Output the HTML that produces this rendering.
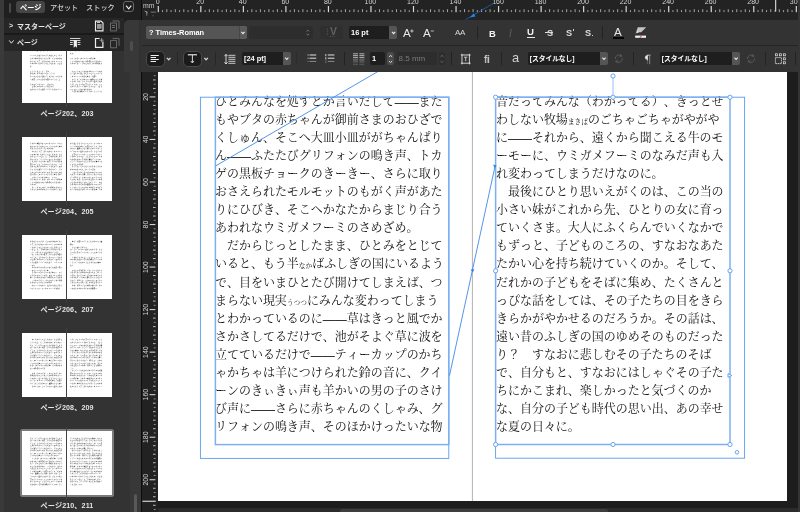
<!DOCTYPE html>
<html lang="ja"><head><meta charset="utf-8"><title>ページ210、211</title>
<style>
html,body{margin:0;padding:0}
body{width:800px;height:512px;overflow:hidden;position:relative;background:#1d1d1d;font-family:"Liberation Sans","Noto Sans CJK JP",sans-serif;color:#e6e6e6}
div,span,b,i{box-sizing:border-box}
.abs{position:absolute}
/* canvas */
#page{position:absolute;left:157.5px;top:54.4px;width:629.6px;height:446.6px;background:#fff}
#gutR{position:absolute;left:797.8px;top:0;width:3px;height:512px;z-index:6;background:#343434}
#gutB{position:absolute;left:157.5px;top:508px;width:640px;height:4px;background:#2b2b2b}
#hsb{position:absolute;left:340px;top:509px;width:268px;height:4px;background:#3d3d3d;border-radius:2px 2px 0 0}
.ln{position:absolute;width:227.6px;height:18px;line-height:18px;font-size:11.98px;white-space:nowrap;color:#111;font-family:"Liberation Serif","Noto Serif CJK SC",serif;text-align:justify;text-align-last:justify;font-weight:400;text-spacing-trim:space-all;font-kerning:none}
.ln.s{text-align:left;text-align-last:left;width:auto}
.ln u{text-decoration:none;font-weight:700}
.ln i{font-style:normal;font-size:6.7px;font-weight:400}
#ov{position:absolute;left:0;top:0;width:800px;height:512px}
/* rulers */
#vr{position:absolute;left:141px;top:60px;width:17px;height:452px;background:#222}
#vr svg,#hr svg{position:absolute;left:0;top:0}
#hr{position:absolute;left:141px;top:0;width:659px;height:20px;background:#232323;overflow:hidden}
#hr text,#vr text{font-family:"Liberation Sans",sans-serif;font-size:7px;fill:#d4d4d4}
/* toolbar */
#tb{z-index:5;position:absolute;left:124.4px;top:20px;width:676px;height:52px;background:#333;border-top-left-radius:5px}
#tb .sep{position:absolute;left:17.8px;top:24.6px;width:659px;height:1px;background:#252525}
#tb .edge{position:absolute;left:0;top:0;width:14.4px;height:52px;background:#383838;border-top-left-radius:5px}
.f{position:absolute;height:13px;border-radius:2px;font-size:7.5px;line-height:14.2px;color:#fff;white-space:nowrap;overflow:hidden;font-weight:700}
.sx{display:inline-block;font-size:8.1px;transform:scaleX(.92);transform-origin:0 50%}
.vs{position:absolute;width:1px;height:13px;background:#232323}
.ic{position:absolute}
/* left panel */
#lp{position:absolute;left:0;top:0;width:140.6px;height:512px;background:#333}
#lp .strip{position:absolute;left:0;top:0;width:3.6px;height:512px;background:#3a3a3a}
#tabs{position:absolute;left:0;top:0;width:140.6px;height:17.8px;background:#1f1f1f}
.row{position:absolute;left:3.6px;width:120.8px;background:#262626;font-size:7px;font-weight:700;color:#e8e8e8}
.rt{font-size:7px;font-weight:700;color:#e8e8e8;line-height:10px;white-space:nowrap}
.th{position:absolute;left:22.2px;width:89.6px;height:64px;background:#fff;overflow:hidden}
.th b{position:absolute;height:1.3px;display:block;background:repeating-linear-gradient(90deg,#7c7c7c 0,#9a9a9a 1.1px,#d8d8d8 1.3px,#d8d8d8 1.72px)}
.tt{position:absolute;width:32.25px;height:2.56px;line-height:2.56px;font-size:1.7px;white-space:nowrap;color:#000;font-weight:600;font-family:"Liberation Serif","Noto Serif CJK SC",serif;text-align:justify;text-align-last:justify;text-spacing-trim:space-all}
.tt.s{text-align:left;text-align-last:left;width:auto}
.tsp{position:absolute;left:65.9px;width:1.3px;height:73px;background:#404040}
.tl{position:absolute;left:3.6px;width:126px;text-align:center;font-size:7.15px;font-weight:700;color:#e4e4e4;line-height:10px;letter-spacing:.1px}
.tsel{position:absolute;left:20.2px;width:93.6px;height:68px;background:#7a7a7a;border-radius:2.5px}
.ln,.f,.tt,.tl,.rt,#tabs div,#tbi div,#hr svg,#vr svg{will-change:transform}
</style></head>
<body>
<div id="page"></div>
<div id="gutR"></div><div id="gutB"></div><div id="hsb"></div>
<div class="ln" style="left:215px;top:93px">ひとみんなを処すとか言いだして<u>——</u>また</div>
<div class="ln" style="left:215px;top:111px">もやブタの赤ちゃんが御前さまのおひざで</div>
<div class="ln" style="left:215px;top:129px">くしゅん、そこへ大皿小皿ががちゃんぱり</div>
<div class="ln" style="left:215px;top:147px">ん<u>——</u>ふたたびグリフォンの鳴き声、トカ</div>
<div class="ln" style="left:215px;top:165px">ゲの黒板チョークのきーきー、さらに取り</div>
<div class="ln" style="left:215px;top:183px">おさえられたモルモットのもがく声があた</div>
<div class="ln" style="left:215px;top:201px">りにひびき、そこへかなたからまじり合う</div>
<div class="ln s" style="left:215px;top:219px">あわれなウミガメフーミのさめざめ。</div>
<div class="ln" style="left:215px;top:237px">　だからじっとしたまま、ひとみをとじて</div>
<div class="ln" style="left:215px;top:255px">いると、もう半<i>なか</i>ばふしぎの国にいるよう</div>
<div class="ln" style="left:215px;top:274px">で、目をいまひとたび開けてしまえば、つ</div>
<div class="ln s" style="left:215px;top:292px">まらない現実<i>うつつ</i>にみんな変わってしまう</div>
<div class="ln" style="left:215px;top:310px">とわかっているのに<u>——</u>草はきっと風でか</div>
<div class="ln" style="left:215px;top:328px">さかさしてるだけで、池がそよぐ草に波を</div>
<div class="ln" style="left:215px;top:346px">立てているだけで<u>——</u>ティーカップのかち</div>
<div class="ln" style="left:215px;top:364px">ゃかちゃは羊につけられた鈴の音に、クイ</div>
<div class="ln" style="left:215px;top:382px">ーンのきぃきぃ声も羊かいの男の子のさけ</div>
<div class="ln" style="left:215px;top:400px">び声に<u>——</u>さらに赤ちゃんのくしゃみ、グ</div>
<div class="ln" style="left:215px;top:418px">リフォンの鳴き声、そのほかけったいな物</div>
<div class="ln" style="left:496px;top:93px">音だってみんな（わかってる）、きっとせ</div>
<div class="ln s" style="left:496px;top:111px">わしない牧場<i>まきば</i>のごちゃごちゃがやがや</div>
<div class="ln" style="left:496px;top:129px">に<u>——</u>それから、遠くから聞こえる牛のモ</div>
<div class="ln" style="left:496px;top:147px">ーモーに、ウミガメフーミのなみだ声も入</div>
<div class="ln s" style="left:496px;top:165px">れ変わってしまうだけなのに。</div>
<div class="ln" style="left:496px;top:183px">　最後にひとり思いえがくのは、この当の</div>
<div class="ln" style="left:496px;top:201px">小さい妹がこれから先、ひとりの女に育っ</div>
<div class="ln" style="left:496px;top:219px">ていくさま。大人にふくらんでいくなかで</div>
<div class="ln" style="left:496px;top:237px">もずっと、子どものころの、すなおなあた</div>
<div class="ln" style="left:496px;top:255px">たかい心を持ち続けていくのか。そして、</div>
<div class="ln" style="left:496px;top:274px">だれかの子どもをそばに集め、たくさんと</div>
<div class="ln" style="left:496px;top:292px">っぴな話をしては、その子たちの目をきら</div>
<div class="ln" style="left:496px;top:310px">きらかがやかせるのだろうか。その話は、</div>
<div class="ln" style="left:496px;top:328px">遠い昔のふしぎの国のゆめそのものだった</div>
<div class="ln s" style="left:496px;top:346px">り？　すなおに悲しむその子たちのそば</div>
<div class="ln" style="left:496px;top:364px">で、自分もと、すなおにはしゃぐその子た</div>
<div class="ln s" style="left:496px;top:382px">ちにかこまれ、楽しかったと気づくのか</div>
<div class="ln" style="left:496px;top:400px">な、自分の子ども時代の思い出、あの幸せ</div>
<div class="ln s" style="left:496px;top:418px">な夏の日々に。</div>
<svg id="ov" viewBox="0 0 800 512">
 <line x1="472.4" y1="54" x2="472.4" y2="501" stroke="#969696" stroke-width="0.75"/>
 <g fill="none" stroke="#4a94ea">
  <rect x="200.4" y="97.2" width="248.4" height="361.2" stroke-width="0.9" stroke="#5a9cec"/>
  <rect x="215.4" y="97.2" width="233.4" height="347.4" stroke-width="1.5" stroke="#7db0f0"/>
  <rect x="495.6" y="97.2" width="249" height="361" stroke-width="0.9" stroke="#5a9cec"/>
  <rect x="495.6" y="97.2" width="234.4" height="347.3" stroke-width="1.5" stroke="#7db0f0"/>
  <line x1="215.5" y1="166" x2="496" y2="2.8" stroke-width="0.9" stroke="#3f8ae6"/>
  <line x1="449.5" y1="375.5" x2="495" y2="166.4" stroke-width="0.9" stroke="#3f8ae6"/>
  <line x1="613" y1="76" x2="613" y2="97" stroke-width="0.8" stroke="#7db0f0"/>
 </g>
 <g fill="#fff" stroke="#5a9cec" stroke-width="0.9">
  <circle cx="495.6" cy="97.2" r="2.1"/><circle cx="613" cy="97.2" r="2.1"/><circle cx="730" cy="97.2" r="2.1"/>
  <circle cx="495.6" cy="270.8" r="2.1"/><circle cx="730" cy="270.8" r="2.1"/>
  <circle cx="495.6" cy="444.5" r="2.1"/><circle cx="613" cy="444.5" r="2.1"/><circle cx="730" cy="444.5" r="2.1"/>
  <circle cx="613" cy="76" r="2.1"/><circle cx="737" cy="452.3" r="1.8"/>
  <path d="M728 373.6 L731.8 375.5 L728 377.4 Z"/>
 </g>
 <path d="M493.2 164.6 L496.6 165.4 L494.6 168.2 Z" fill="#2f80e6"/>
 <path d="M470.6 269.4 L474.4 269.2 L472.8 272.6 Z" fill="#2f80e6"/>
</svg>
<div id="vr"><div class="abs" style="left:-.4px;top:0;width:1.3px;height:452px;background:#0c0c0c"></div><svg width="17" height="512" viewBox="0 60 17 512"><rect x="12" y="70.91" width="2.6" height="1" fill="#bcbcbc"/><rect x="12.8" y="75.17" width="1.8" height="1" fill="#909090"/><rect x="12" y="79.42" width="2.6" height="1" fill="#bcbcbc"/><rect x="12.8" y="83.67" width="1.8" height="1" fill="#909090"/><rect x="12" y="87.93" width="2.6" height="1" fill="#bcbcbc"/><rect x="12.8" y="92.18" width="1.8" height="1" fill="#909090"/><rect x="8.6" y="96.38" width="5.8" height="1.1" fill="#d0d0d0"/><rect x="12.8" y="100.69" width="1.8" height="1" fill="#909090"/><rect x="12" y="104.94" width="2.6" height="1" fill="#bcbcbc"/><rect x="12.8" y="109.19" width="1.8" height="1" fill="#909090"/><rect x="12" y="113.45" width="2.6" height="1" fill="#bcbcbc"/><rect x="12.8" y="117.70" width="1.8" height="1" fill="#909090"/><rect x="12" y="121.95" width="2.6" height="1" fill="#bcbcbc"/><rect x="12.8" y="126.21" width="1.8" height="1" fill="#909090"/><rect x="12" y="130.46" width="2.6" height="1" fill="#bcbcbc"/><rect x="12.8" y="134.71" width="1.8" height="1" fill="#909090"/><rect x="8.6" y="138.92" width="5.8" height="1.1" fill="#d0d0d0"/><rect x="12.8" y="143.22" width="1.8" height="1" fill="#909090"/><rect x="12" y="147.47" width="2.6" height="1" fill="#bcbcbc"/><rect x="12.8" y="151.73" width="1.8" height="1" fill="#909090"/><rect x="12" y="155.98" width="2.6" height="1" fill="#bcbcbc"/><rect x="12.8" y="160.24" width="1.8" height="1" fill="#909090"/><rect x="12" y="164.49" width="2.6" height="1" fill="#bcbcbc"/><rect x="12.8" y="168.74" width="1.8" height="1" fill="#909090"/><rect x="12" y="173.00" width="2.6" height="1" fill="#bcbcbc"/><rect x="12.8" y="177.25" width="1.8" height="1" fill="#909090"/><rect x="8.6" y="181.45" width="5.8" height="1.1" fill="#d0d0d0"/><rect x="12.8" y="185.76" width="1.8" height="1" fill="#909090"/><rect x="12" y="190.01" width="2.6" height="1" fill="#bcbcbc"/><rect x="12.8" y="194.26" width="1.8" height="1" fill="#909090"/><rect x="12" y="198.52" width="2.6" height="1" fill="#bcbcbc"/><rect x="12.8" y="202.77" width="1.8" height="1" fill="#909090"/><rect x="12" y="207.02" width="2.6" height="1" fill="#bcbcbc"/><rect x="12.8" y="211.28" width="1.8" height="1" fill="#909090"/><rect x="12" y="215.53" width="2.6" height="1" fill="#bcbcbc"/><rect x="12.8" y="219.78" width="1.8" height="1" fill="#909090"/><rect x="8.6" y="223.99" width="5.8" height="1.1" fill="#d0d0d0"/><rect x="12.8" y="228.29" width="1.8" height="1" fill="#909090"/><rect x="12" y="232.54" width="2.6" height="1" fill="#bcbcbc"/><rect x="12.8" y="236.80" width="1.8" height="1" fill="#909090"/><rect x="12" y="241.05" width="2.6" height="1" fill="#bcbcbc"/><rect x="12.8" y="245.30" width="1.8" height="1" fill="#909090"/><rect x="12" y="249.56" width="2.6" height="1" fill="#bcbcbc"/><rect x="12.8" y="253.81" width="1.8" height="1" fill="#909090"/><rect x="12" y="258.06" width="2.6" height="1" fill="#bcbcbc"/><rect x="12.8" y="262.32" width="1.8" height="1" fill="#909090"/><rect x="8.6" y="266.52" width="5.8" height="1.1" fill="#d0d0d0"/><rect x="12.8" y="270.82" width="1.8" height="1" fill="#909090"/><rect x="12" y="275.08" width="2.6" height="1" fill="#bcbcbc"/><rect x="12.8" y="279.33" width="1.8" height="1" fill="#909090"/><rect x="12" y="283.58" width="2.6" height="1" fill="#bcbcbc"/><rect x="12.8" y="287.84" width="1.8" height="1" fill="#909090"/><rect x="12" y="292.09" width="2.6" height="1" fill="#bcbcbc"/><rect x="12.8" y="296.34" width="1.8" height="1" fill="#909090"/><rect x="12" y="300.60" width="2.6" height="1" fill="#bcbcbc"/><rect x="12.8" y="304.85" width="1.8" height="1" fill="#909090"/><rect x="8.6" y="309.05" width="5.8" height="1.1" fill="#d0d0d0"/><rect x="12.8" y="313.36" width="1.8" height="1" fill="#909090"/><rect x="12" y="317.61" width="2.6" height="1" fill="#bcbcbc"/><rect x="12.8" y="321.86" width="1.8" height="1" fill="#909090"/><rect x="12" y="326.12" width="2.6" height="1" fill="#bcbcbc"/><rect x="12.8" y="330.37" width="1.8" height="1" fill="#909090"/><rect x="12" y="334.62" width="2.6" height="1" fill="#bcbcbc"/><rect x="12.8" y="338.88" width="1.8" height="1" fill="#909090"/><rect x="12" y="343.13" width="2.6" height="1" fill="#bcbcbc"/><rect x="12.8" y="347.38" width="1.8" height="1" fill="#909090"/><rect x="8.6" y="351.59" width="5.8" height="1.1" fill="#d0d0d0"/><rect x="12.8" y="355.89" width="1.8" height="1" fill="#909090"/><rect x="12" y="360.14" width="2.6" height="1" fill="#bcbcbc"/><rect x="12.8" y="364.40" width="1.8" height="1" fill="#909090"/><rect x="12" y="368.65" width="2.6" height="1" fill="#bcbcbc"/><rect x="12.8" y="372.90" width="1.8" height="1" fill="#909090"/><rect x="12" y="377.16" width="2.6" height="1" fill="#bcbcbc"/><rect x="12.8" y="381.41" width="1.8" height="1" fill="#909090"/><rect x="12" y="385.67" width="2.6" height="1" fill="#bcbcbc"/><rect x="12.8" y="389.92" width="1.8" height="1" fill="#909090"/><rect x="8.6" y="394.12" width="5.8" height="1.1" fill="#d0d0d0"/><rect x="12.8" y="398.43" width="1.8" height="1" fill="#909090"/><rect x="12" y="402.68" width="2.6" height="1" fill="#bcbcbc"/><rect x="12.8" y="406.93" width="1.8" height="1" fill="#909090"/><rect x="12" y="411.19" width="2.6" height="1" fill="#bcbcbc"/><rect x="12.8" y="415.44" width="1.8" height="1" fill="#909090"/><rect x="12" y="419.69" width="2.6" height="1" fill="#bcbcbc"/><rect x="12.8" y="423.95" width="1.8" height="1" fill="#909090"/><rect x="12" y="428.20" width="2.6" height="1" fill="#bcbcbc"/><rect x="12.8" y="432.45" width="1.8" height="1" fill="#909090"/><rect x="8.6" y="436.66" width="5.8" height="1.1" fill="#d0d0d0"/><rect x="12.8" y="440.96" width="1.8" height="1" fill="#909090"/><rect x="12" y="445.21" width="2.6" height="1" fill="#bcbcbc"/><rect x="12.8" y="449.47" width="1.8" height="1" fill="#909090"/><rect x="12" y="453.72" width="2.6" height="1" fill="#bcbcbc"/><rect x="12.8" y="457.97" width="1.8" height="1" fill="#909090"/><rect x="12" y="462.23" width="2.6" height="1" fill="#bcbcbc"/><rect x="12.8" y="466.48" width="1.8" height="1" fill="#909090"/><rect x="12" y="470.73" width="2.6" height="1" fill="#bcbcbc"/><rect x="12.8" y="474.99" width="1.8" height="1" fill="#909090"/><rect x="8.6" y="479.19" width="5.8" height="1.1" fill="#d0d0d0"/><rect x="12.8" y="483.49" width="1.8" height="1" fill="#909090"/><rect x="12" y="487.75" width="2.6" height="1" fill="#bcbcbc"/><rect x="12.8" y="492.00" width="1.8" height="1" fill="#909090"/><rect x="12" y="496.25" width="2.6" height="1" fill="#bcbcbc"/><rect x="12" y="504.76" width="2.6" height="1" fill="#bcbcbc"/><rect x="12.8" y="509.01" width="1.8" height="1" fill="#909090"/><rect x="12" y="513.27" width="2.6" height="1" fill="#bcbcbc"/><rect x="12.8" y="517.52" width="1.8" height="1" fill="#909090"/><rect x="8.6" y="521.72" width="5.8" height="1.1" fill="#d0d0d0"/><text transform="translate(7,96.93) rotate(-90)" text-anchor="middle">20</text><text transform="translate(7,139.47) rotate(-90)" text-anchor="middle">40</text><text transform="translate(7,182.00) rotate(-90)" text-anchor="middle">60</text><text transform="translate(7,224.54) rotate(-90)" text-anchor="middle">80</text><text transform="translate(7,267.07) rotate(-90)" text-anchor="middle">100</text><text transform="translate(7,309.60) rotate(-90)" text-anchor="middle">120</text><text transform="translate(7,352.14) rotate(-90)" text-anchor="middle">140</text><text transform="translate(7,394.67) rotate(-90)" text-anchor="middle">160</text><text transform="translate(7,437.21) rotate(-90)" text-anchor="middle">180</text><text transform="translate(7,479.74) rotate(-90)" text-anchor="middle">200</text><text transform="translate(7,522.27) rotate(-90)" text-anchor="middle">220</text><rect x="1.4" y="500.7" width="13.4" height="1.1" fill="#e0e0e0"/></svg></div>
<div id="hr"><svg width="660" height="20" viewBox="-1 0 660 20"><rect x="15.70" y="6" width="1.2" height="6.2" fill="#d8d8d8"/><rect x="20.05" y="10" width="1" height="2.1" fill="#9a9a9a"/><rect x="24.31" y="9.2" width="1" height="2.9" fill="#a6a6a6"/><rect x="28.56" y="10" width="1" height="2.1" fill="#9a9a9a"/><rect x="32.81" y="9.2" width="1" height="2.9" fill="#a6a6a6"/><rect x="37.07" y="10" width="1" height="2.1" fill="#9a9a9a"/><rect x="41.32" y="9.2" width="1" height="2.9" fill="#a6a6a6"/><rect x="45.57" y="10" width="1" height="2.1" fill="#9a9a9a"/><rect x="49.83" y="9.2" width="1" height="2.9" fill="#a6a6a6"/><rect x="54.08" y="10" width="1" height="2.1" fill="#9a9a9a"/><rect x="58.23" y="6" width="1.2" height="6.2" fill="#d8d8d8"/><rect x="62.59" y="10" width="1" height="2.1" fill="#9a9a9a"/><rect x="66.84" y="9.2" width="1" height="2.9" fill="#a6a6a6"/><rect x="71.09" y="10" width="1" height="2.1" fill="#9a9a9a"/><rect x="75.35" y="9.2" width="1" height="2.9" fill="#a6a6a6"/><rect x="79.60" y="10" width="1" height="2.1" fill="#9a9a9a"/><rect x="83.85" y="9.2" width="1" height="2.9" fill="#a6a6a6"/><rect x="88.11" y="10" width="1" height="2.1" fill="#9a9a9a"/><rect x="92.36" y="9.2" width="1" height="2.9" fill="#a6a6a6"/><rect x="96.61" y="10" width="1" height="2.1" fill="#9a9a9a"/><rect x="100.77" y="6" width="1.2" height="6.2" fill="#d8d8d8"/><rect x="105.12" y="10" width="1" height="2.1" fill="#9a9a9a"/><rect x="109.37" y="9.2" width="1" height="2.9" fill="#a6a6a6"/><rect x="113.63" y="10" width="1" height="2.1" fill="#9a9a9a"/><rect x="117.88" y="9.2" width="1" height="2.9" fill="#a6a6a6"/><rect x="122.13" y="10" width="1" height="2.1" fill="#9a9a9a"/><rect x="126.39" y="9.2" width="1" height="2.9" fill="#a6a6a6"/><rect x="130.64" y="10" width="1" height="2.1" fill="#9a9a9a"/><rect x="134.90" y="9.2" width="1" height="2.9" fill="#a6a6a6"/><rect x="139.15" y="10" width="1" height="2.1" fill="#9a9a9a"/><rect x="143.30" y="6" width="1.2" height="6.2" fill="#d8d8d8"/><rect x="147.66" y="10" width="1" height="2.1" fill="#9a9a9a"/><rect x="151.91" y="9.2" width="1" height="2.9" fill="#a6a6a6"/><rect x="156.16" y="10" width="1" height="2.1" fill="#9a9a9a"/><rect x="160.42" y="9.2" width="1" height="2.9" fill="#a6a6a6"/><rect x="164.67" y="10" width="1" height="2.1" fill="#9a9a9a"/><rect x="168.92" y="9.2" width="1" height="2.9" fill="#a6a6a6"/><rect x="173.18" y="10" width="1" height="2.1" fill="#9a9a9a"/><rect x="177.43" y="9.2" width="1" height="2.9" fill="#a6a6a6"/><rect x="181.68" y="10" width="1" height="2.1" fill="#9a9a9a"/><rect x="185.84" y="6" width="1.2" height="6.2" fill="#d8d8d8"/><rect x="190.19" y="10" width="1" height="2.1" fill="#9a9a9a"/><rect x="194.44" y="9.2" width="1" height="2.9" fill="#a6a6a6"/><rect x="198.70" y="10" width="1" height="2.1" fill="#9a9a9a"/><rect x="202.95" y="9.2" width="1" height="2.9" fill="#a6a6a6"/><rect x="207.20" y="10" width="1" height="2.1" fill="#9a9a9a"/><rect x="211.46" y="9.2" width="1" height="2.9" fill="#a6a6a6"/><rect x="215.71" y="10" width="1" height="2.1" fill="#9a9a9a"/><rect x="219.96" y="9.2" width="1" height="2.9" fill="#a6a6a6"/><rect x="224.22" y="10" width="1" height="2.1" fill="#9a9a9a"/><rect x="228.37" y="6" width="1.2" height="6.2" fill="#d8d8d8"/><rect x="232.72" y="10" width="1" height="2.1" fill="#9a9a9a"/><rect x="236.98" y="9.2" width="1" height="2.9" fill="#a6a6a6"/><rect x="241.23" y="10" width="1" height="2.1" fill="#9a9a9a"/><rect x="245.48" y="9.2" width="1" height="2.9" fill="#a6a6a6"/><rect x="249.74" y="10" width="1" height="2.1" fill="#9a9a9a"/><rect x="253.99" y="9.2" width="1" height="2.9" fill="#a6a6a6"/><rect x="258.24" y="10" width="1" height="2.1" fill="#9a9a9a"/><rect x="262.50" y="9.2" width="1" height="2.9" fill="#a6a6a6"/><rect x="266.75" y="10" width="1" height="2.1" fill="#9a9a9a"/><rect x="270.90" y="6" width="1.2" height="6.2" fill="#d8d8d8"/><rect x="275.26" y="10" width="1" height="2.1" fill="#9a9a9a"/><rect x="279.51" y="9.2" width="1" height="2.9" fill="#a6a6a6"/><rect x="283.76" y="10" width="1" height="2.1" fill="#9a9a9a"/><rect x="288.02" y="9.2" width="1" height="2.9" fill="#a6a6a6"/><rect x="292.27" y="10" width="1" height="2.1" fill="#9a9a9a"/><rect x="296.52" y="9.2" width="1" height="2.9" fill="#a6a6a6"/><rect x="300.78" y="10" width="1" height="2.1" fill="#9a9a9a"/><rect x="305.03" y="9.2" width="1" height="2.9" fill="#a6a6a6"/><rect x="309.28" y="10" width="1" height="2.1" fill="#9a9a9a"/><rect x="313.44" y="6" width="1.2" height="6.2" fill="#d8d8d8"/><rect x="317.79" y="10" width="1" height="2.1" fill="#9a9a9a"/><rect x="322.04" y="9.2" width="1" height="2.9" fill="#a6a6a6"/><rect x="326.30" y="10" width="1" height="2.1" fill="#9a9a9a"/><rect x="330.55" y="9.2" width="1" height="2.9" fill="#a6a6a6"/><rect x="334.81" y="10" width="1" height="2.1" fill="#9a9a9a"/><rect x="339.06" y="9.2" width="1" height="2.9" fill="#a6a6a6"/><rect x="343.31" y="10" width="1" height="2.1" fill="#9a9a9a"/><rect x="347.57" y="9.2" width="1" height="2.9" fill="#a6a6a6"/><rect x="351.82" y="10" width="1" height="2.1" fill="#9a9a9a"/><rect x="355.97" y="6" width="1.2" height="6.2" fill="#d8d8d8"/><rect x="360.33" y="10" width="1" height="2.1" fill="#9a9a9a"/><rect x="364.58" y="9.2" width="1" height="2.9" fill="#a6a6a6"/><rect x="368.83" y="10" width="1" height="2.1" fill="#9a9a9a"/><rect x="373.09" y="9.2" width="1" height="2.9" fill="#a6a6a6"/><rect x="377.34" y="10" width="1" height="2.1" fill="#9a9a9a"/><rect x="381.59" y="9.2" width="1" height="2.9" fill="#a6a6a6"/><rect x="385.85" y="10" width="1" height="2.1" fill="#9a9a9a"/><rect x="390.10" y="9.2" width="1" height="2.9" fill="#a6a6a6"/><rect x="394.35" y="10" width="1" height="2.1" fill="#9a9a9a"/><rect x="398.51" y="6" width="1.2" height="6.2" fill="#d8d8d8"/><rect x="402.86" y="10" width="1" height="2.1" fill="#9a9a9a"/><rect x="407.11" y="9.2" width="1" height="2.9" fill="#a6a6a6"/><rect x="411.37" y="10" width="1" height="2.1" fill="#9a9a9a"/><rect x="415.62" y="9.2" width="1" height="2.9" fill="#a6a6a6"/><rect x="419.87" y="10" width="1" height="2.1" fill="#9a9a9a"/><rect x="424.13" y="9.2" width="1" height="2.9" fill="#a6a6a6"/><rect x="428.38" y="10" width="1" height="2.1" fill="#9a9a9a"/><rect x="432.63" y="9.2" width="1" height="2.9" fill="#a6a6a6"/><rect x="436.89" y="10" width="1" height="2.1" fill="#9a9a9a"/><rect x="441.04" y="6" width="1.2" height="6.2" fill="#d8d8d8"/><rect x="445.39" y="10" width="1" height="2.1" fill="#9a9a9a"/><rect x="449.65" y="9.2" width="1" height="2.9" fill="#a6a6a6"/><rect x="453.90" y="10" width="1" height="2.1" fill="#9a9a9a"/><rect x="458.15" y="9.2" width="1" height="2.9" fill="#a6a6a6"/><rect x="462.41" y="10" width="1" height="2.1" fill="#9a9a9a"/><rect x="466.66" y="9.2" width="1" height="2.9" fill="#a6a6a6"/><rect x="470.91" y="10" width="1" height="2.1" fill="#9a9a9a"/><rect x="475.17" y="9.2" width="1" height="2.9" fill="#a6a6a6"/><rect x="479.42" y="10" width="1" height="2.1" fill="#9a9a9a"/><rect x="483.57" y="6" width="1.2" height="6.2" fill="#d8d8d8"/><rect x="487.93" y="10" width="1" height="2.1" fill="#9a9a9a"/><rect x="492.18" y="9.2" width="1" height="2.9" fill="#a6a6a6"/><rect x="496.43" y="10" width="1" height="2.1" fill="#9a9a9a"/><rect x="500.69" y="9.2" width="1" height="2.9" fill="#a6a6a6"/><rect x="504.94" y="10" width="1" height="2.1" fill="#9a9a9a"/><rect x="509.19" y="9.2" width="1" height="2.9" fill="#a6a6a6"/><rect x="513.45" y="10" width="1" height="2.1" fill="#9a9a9a"/><rect x="517.70" y="9.2" width="1" height="2.9" fill="#a6a6a6"/><rect x="521.95" y="10" width="1" height="2.1" fill="#9a9a9a"/><rect x="526.11" y="6" width="1.2" height="6.2" fill="#d8d8d8"/><rect x="530.46" y="10" width="1" height="2.1" fill="#9a9a9a"/><rect x="534.71" y="9.2" width="1" height="2.9" fill="#a6a6a6"/><rect x="538.97" y="10" width="1" height="2.1" fill="#9a9a9a"/><rect x="543.22" y="9.2" width="1" height="2.9" fill="#a6a6a6"/><rect x="547.47" y="10" width="1" height="2.1" fill="#9a9a9a"/><rect x="551.73" y="9.2" width="1" height="2.9" fill="#a6a6a6"/><rect x="555.98" y="10" width="1" height="2.1" fill="#9a9a9a"/><rect x="560.24" y="9.2" width="1" height="2.9" fill="#a6a6a6"/><rect x="564.49" y="10" width="1" height="2.1" fill="#9a9a9a"/><rect x="568.64" y="6" width="1.2" height="6.2" fill="#d8d8d8"/><rect x="573.00" y="10" width="1" height="2.1" fill="#9a9a9a"/><rect x="577.25" y="9.2" width="1" height="2.9" fill="#a6a6a6"/><rect x="581.50" y="10" width="1" height="2.1" fill="#9a9a9a"/><rect x="585.76" y="9.2" width="1" height="2.9" fill="#a6a6a6"/><rect x="590.01" y="10" width="1" height="2.1" fill="#9a9a9a"/><rect x="594.26" y="9.2" width="1" height="2.9" fill="#a6a6a6"/><rect x="598.52" y="10" width="1" height="2.1" fill="#9a9a9a"/><rect x="602.77" y="9.2" width="1" height="2.9" fill="#a6a6a6"/><rect x="607.02" y="10" width="1" height="2.1" fill="#9a9a9a"/><rect x="611.18" y="6" width="1.2" height="6.2" fill="#d8d8d8"/><rect x="615.53" y="10" width="1" height="2.1" fill="#9a9a9a"/><rect x="619.78" y="9.2" width="1" height="2.9" fill="#a6a6a6"/><rect x="624.04" y="10" width="1" height="2.1" fill="#9a9a9a"/><rect x="628.29" y="9.2" width="1" height="2.9" fill="#a6a6a6"/><rect x="632.54" y="10" width="1" height="2.1" fill="#9a9a9a"/><rect x="636.80" y="9.2" width="1" height="2.9" fill="#a6a6a6"/><rect x="641.05" y="10" width="1" height="2.1" fill="#9a9a9a"/><rect x="645.30" y="9.2" width="1" height="2.9" fill="#a6a6a6"/><rect x="649.56" y="10" width="1" height="2.1" fill="#9a9a9a"/><rect x="653.71" y="6" width="1.2" height="6.2" fill="#d8d8d8"/><rect x="658.06" y="10" width="1" height="2.1" fill="#9a9a9a"/><text x="15.70" y="3.6" text-anchor="middle">0</text><text x="58.23" y="3.6" text-anchor="middle">20</text><text x="100.77" y="3.6" text-anchor="middle">40</text><text x="143.30" y="3.6" text-anchor="middle">60</text><text x="185.84" y="3.6" text-anchor="middle">80</text><text x="228.37" y="3.6" text-anchor="middle">100</text><text x="270.90" y="3.6" text-anchor="middle">120</text><text x="313.44" y="3.6" text-anchor="middle">140</text><text x="355.97" y="3.6" text-anchor="middle">160</text><text x="398.51" y="3.6" text-anchor="middle">180</text><text x="441.04" y="3.6" text-anchor="middle">200</text><text x="483.57" y="3.6" text-anchor="middle">220</text><text x="526.11" y="3.6" text-anchor="middle">240</text><text x="568.64" y="3.6" text-anchor="middle">260</text><text x="611.18" y="3.6" text-anchor="middle">280</text><text x="653.71" y="3.6" text-anchor="middle">300</text>
<text x="1" y="8" style="font-size:6.9px;fill:#c8c8c8">mm</text>
<rect x="8.6" y="11.6" width="5.4" height="1" fill="#777"/><path d="M2.6 11 L5.4 12.6 M4.8 11.2 L4.8 15.6" stroke="#aaa" stroke-width="0.8" fill="none"/><rect x="10.6" y="15.4" width="0.8" height="0.8" fill="#999"/>
<line x1="352.4" y1="2.8" x2="323.6" y2="19.6" stroke="#1d66bd" stroke-width="0.8"/>
<path d="M328 17.6 L331.7 13.3 L333.4 16.6 Z" fill="#2585ee"/>
<rect x="633.2" y="0" width="1" height="11.4" fill="#f0f0f0"/></svg><div class="abs" style="left:-.4px;top:0;width:1.3px;height:20px;background:#0c0c0c"></div></div>
<div id="tb"><div class="edge"></div><div class="sep"></div>
<div class="abs" style="left:5.6px;top:20.8px;width:3px;height:10.6px;border-radius:1.5px;background:#4e4e4e"></div>
<div class="abs" style="left:14.2px;top:0;width:1px;height:52px;background:#303030"></div>
<div id="tbi" class="abs" style="left:-124.4px;top:-20px;width:800px;height:72px">
<!-- row 1 -->
<div class="f" style="left:145.6px;top:26px;width:101px;background:#555;padding-left:2.8px;letter-spacing:-.05px"><span class="sx">? Times-Roman</span></div>
<div class="abs" style="left:238.6px;top:26px;width:8px;height:13px;background:#5b5b5b;border-left:1px solid #474747;border-radius:0 2px 2px 0"></div>
<svg class="ic" style="left:240px;top:31px;overflow:visible" width="6" height="5" viewBox="0 0 6 5"><g transform="translate(0.00,-0.40)"><path d="M1.4 1.3 L3 3.1 L4.6 1.3" fill="none" stroke="#eee" stroke-width="1.1"/></g></svg>
<div class="f" style="left:249px;top:26px;width:64px;background:#2d2d2d;border-radius:3px"></div>
<svg class="ic" style="left:305px;top:28px;overflow:visible" width="6" height="9" viewBox="0 0 6 9"><g transform="translate(-0.20,0.00)"><path d="M1.7 3.5 L3 2.2 L4.3 3.5 M1.7 5.9 L3 7.2 L4.3 5.9" fill="none" stroke="#808080" stroke-width="0.9"/></g></svg>
<div class="f" style="left:320px;top:26px;width:23px;background:#2f2f2f;border-radius:3px"></div>
<div class="abs" style="left:330px;top:25.6px;font-size:10.4px;line-height:12px;color:#616161;font-weight:700">V</div>
<svg class="ic" style="left:325px;top:27px;overflow:visible" width="14" height="12" viewBox="0 0 14 12"><g transform="translate(0.00,0.00)"><path d="M2.4 1.6 V8 M4.6 9.4 H10.2" stroke="#5a5a5a" stroke-width="0.8" stroke-dasharray="1.4 1" fill="none"/></g></svg>
<div class="f" style="left:348.5px;top:26px;width:41px;background:#1e1e1e;padding-left:2px;border-radius:2px 0 0 2px"><span class="sx">16 pt</span></div>
<div class="abs" style="left:389.4px;top:26px;width:8.4px;height:13px;background:#555;border-radius:0 2px 2px 0"></div>
<svg class="ic" style="left:391px;top:31px;overflow:visible" width="6" height="5" viewBox="0 0 6 5"><g transform="translate(-0.40,-0.40)"><path d="M1.4 1.3 L3 3.1 L4.6 1.3" fill="none" stroke="#eee" stroke-width="1.1"/></g></svg>
<div class="abs" style="left:402.6px;top:26.6px;font-size:11.6px;line-height:12px;color:#e4e4e4">A</div>
<svg class="ic" style="left:410px;top:29px;overflow:visible" width="5" height="5" viewBox="0 0 5 5"><g transform="translate(-0.40,-0.40)"><path d="M0.6 2.4 H4 M2.3 0.8 V4" stroke="#ddd" stroke-width="0.8"/></g></svg>
<div class="abs" style="left:423.4px;top:26.6px;font-size:11.6px;line-height:12px;color:#e4e4e4">A</div>
<svg class="ic" style="left:430px;top:29px;overflow:visible" width="5" height="5" viewBox="0 0 5 5"><g transform="translate(0.20,-0.40)"><path d="M0.6 2.4 H3.6" stroke="#ddd" stroke-width="0.8"/></g></svg>
<div class="abs" style="left:454.6px;top:27px;font-size:8px;line-height:11px;color:#d8d8d8;letter-spacing:-.3px">AA</div>
<div class="vs" style="left:477.2px;top:26px"></div>
<div class="abs" style="left:489.2px;top:27.8px;font-size:9.4px;line-height:12px;color:#f2f2f2;font-weight:700">B</div>
<div class="abs" style="left:509.4px;top:27.8px;font-size:10px;line-height:12px;color:#5e5e5e;font-style:italic">I</div>
<div class="abs" style="left:527.4px;top:26.4px;font-size:9.6px;line-height:12px;color:#eee;font-weight:700">U</div>
<div class="abs" style="left:527px;top:36.8px;width:7.6px;height:1px;background:#e8e8e8"></div>
<div class="abs" style="left:546.6px;top:26.8px;font-size:9.2px;line-height:12px;color:#ddd;font-weight:700">S</div>
<div class="abs" style="left:545.4px;top:32.4px;width:8.4px;height:.9px;background:#ddd"></div>
<div class="abs" style="left:565.6px;top:26.8px;font-size:9.2px;line-height:12px;color:#ddd;font-weight:700">S</div>
<div class="abs" style="left:572.6px;top:29px;width:1.2px;height:1.6px;background:#ccc"></div>
<div class="abs" style="left:584.8px;top:26.8px;font-size:9.2px;line-height:12px;color:#ddd;font-weight:700">S</div>
<div class="abs" style="left:591.8px;top:35.2px;width:1.2px;height:1.4px;background:#ccc"></div>
<div class="vs" style="left:602.2px;top:26px"></div>
<div class="abs" style="left:614px;top:26.4px;font-size:11.6px;line-height:12px;color:#e6e6e6">A</div>
<div class="abs" style="left:613px;top:36.5px;width:10.6px;height:1.6px;background:#050505"></div>
<svg class="ic" style="left:635px;top:27px;overflow:visible" width="13" height="12" viewBox="0 0 13 12"><g transform="translate(-0.40,-0.40)"><path d="M3.2 0.6 H11.6 L6.6 5.6 H1.8 V4.6 Z" fill="#c4c4c4"/><path d="M0.6 6.8 L3.4 4.4 L4.2 6 Z" fill="#e8e8e8"/><rect x="0.6" y="9" width="10.8" height="2.2" fill="#f2f2f2"/><path d="M5.4 11.2 L7 9" stroke="#e02020" stroke-width="1"/></g></svg>
<!-- row 2 -->
<div class="abs" style="left:145.5px;top:51px;width:18.8px;height:16px;background:#1b1b1b;border:1px solid #4a4a4a;border-radius:5px"></div>
<svg class="ic" style="left:150px;top:54px;overflow:visible" width="10" height="9" viewBox="0 0 10 9"><g transform="translate(0.00,0.00)"><path d="M0.6 1.5 H8.8 M0.6 3.5 H6 M0.6 5.5 H8.8 M0.6 7.5 H6" stroke="#f0f0f0" stroke-width="1"/></g></svg>
<svg class="ic" style="left:166px;top:57px;overflow:visible" width="6" height="5" viewBox="0 0 6 5"><g transform="translate(0.00,-0.20)"><path d="M0.9 1.1 L2.7 3 L4.5 1.1" fill="none" stroke="#d4d4d4" stroke-width="1.25"/></g></svg>
<div class="vs" style="left:177.2px;top:52px;background:#262626"></div>
<div class="abs" style="left:183px;top:51px;width:19px;height:16px;background:#1b1b1b;border:1px solid #4a4a4a;border-radius:5px"></div>
<svg class="ic" style="left:187px;top:54px;overflow:visible" width="11" height="11" viewBox="0 0 11 11"><g transform="translate(0.00,-0.40)"><path d="M0.8 1.2 H10" stroke="#f0f0f0" stroke-width="1.1"/><path d="M5.4 1.4 V9" stroke="#e8e8e8" stroke-width="0.9"/><path d="M3.8 7.4 L5.4 9.4 L7 7.4" fill="none" stroke="#ddd" stroke-width="0.9"/></g></svg>
<svg class="ic" style="left:203px;top:57px;overflow:visible" width="6" height="5" viewBox="0 0 6 5"><g transform="translate(0.40,-0.20)"><path d="M0.9 1.1 L2.7 3 L4.5 1.1" fill="none" stroke="#d4d4d4" stroke-width="1.25"/></g></svg>
<div class="vs" style="left:215px;top:52px;background:#262626"></div>
<svg class="ic" style="left:224px;top:53px;overflow:visible" width="14" height="12" viewBox="0 0 14 12"><g transform="translate(-0.40,0.40)"><path d="M2.4 1 V10.6 M0.8 2.8 L2.4 1 L4 2.8 M0.8 8.8 L2.4 10.6 L4 8.8" fill="none" stroke="#e6e6e6" stroke-width="0.9"/><path d="M4.8 1.9 H11.8 M4.8 3.9 H11.8 M4.8 5.9 H11.8 M4.8 7.9 H11.8 M4.8 9.9 H11.8" stroke="#dadada" stroke-width="0.9"/></g></svg>
<div class="f" style="left:241.9px;top:52px;width:40.8px;background:#1e1e1e;padding-left:2px;border-radius:2px 0 0 2px;letter-spacing:-.05px"><span class="sx">[24 pt]</span></div>
<div class="abs" style="left:282.6px;top:52px;width:8.4px;height:13px;background:#555;border-radius:0 2px 2px 0"></div>
<svg class="ic" style="left:284px;top:56px;overflow:visible" width="6" height="5" viewBox="0 0 6 5"><g transform="translate(-0.20,0.40)"><path d="M1.4 1.3 L3 3.1 L4.6 1.3" fill="none" stroke="#eee" stroke-width="1.1"/></g></svg>
<div class="vs" style="left:296px;top:52px;background:#2c2c2c"></div>
<svg class="ic" style="left:307px;top:54px;overflow:visible" width="10" height="10" viewBox="0 0 10 10"><g transform="translate(0.20,-0.40)"><path d="M2.4 1.4 H9 M2.4 4.6 H9" stroke="#e2e2e2" stroke-width="1"/><path d="M2.4 7.8 H9" stroke="#8a8a8a" stroke-width="1"/><path d="M0.4 1.4 H1.4 M0.4 4.6 H1.4" stroke="#e2e2e2" stroke-width="1"/><path d="M0.4 7.8 H1.4" stroke="#8a8a8a" stroke-width="1"/></g></svg>
<svg class="ic" style="left:324px;top:54px;overflow:visible" width="11" height="11" viewBox="0 0 11 11"><g transform="translate(0.40,-0.40)"><path d="M3.4 1.4 H10 M3.4 4.6 H10" stroke="#e2e2e2" stroke-width="1"/><path d="M3.4 7.8 H10" stroke="#8a8a8a" stroke-width="1"/><path d="M1.4 0.4 V2.6 M1.4 3.6 V5.8" stroke="#ddd" stroke-width="0.9"/><path d="M1.4 6.8 V9.6" stroke="#8a8a8a" stroke-width="0.9" stroke-dasharray="1 0.6"/></g></svg>
<div class="vs" style="left:344px;top:52px"></div>
<svg class="ic" style="left:353px;top:53px;overflow:visible" width="12" height="13" viewBox="0 0 12 13"><g transform="translate(0.00,-0.20)"><g stroke-width="0.8"><path d="M0 1 H5 M6.4 1 H11.4 M0 2.8 H5 M6.4 2.8 H11.4 M0 4.6 H5 M6.4 4.6 H11.4" stroke="#d0d0d0"/><path d="M0 6.4 H5 M6.4 6.4 H11.4 M0 8.2 H5 M6.4 8.2 H11.4" stroke="#8a8a8a"/><path d="M0 10 H5 M6.4 10 H11.4 M0 11.8 H5 M6.4 11.8 H11.4" stroke="#5e5e5e"/></g></g></svg>
<div class="f" style="left:370px;top:52px;width:15px;background:#1e1e1e;padding-left:1.8px"><span class="sx">1</span></div>
<div class="abs" style="left:387px;top:52px;width:7px;height:13px;background:#4b4b4b;border-radius:2px"></div>
<svg class="ic" style="left:388px;top:54px;overflow:visible" width="6" height="10" viewBox="0 0 6 10"><g transform="translate(-0.40,-0.50)"><path d="M1.5 3.3 L3 1.9 L4.5 3.3 M1.5 7.6 L3 9 L4.5 7.6" fill="none" stroke="#e6e6e6" stroke-width="1"/></g></svg>
<div class="f" style="left:397px;top:52px;width:40px;background:#2d2d2d;padding-left:1.6px;color:#7a7a7a;font-weight:400;font-size:8px;border-radius:3px">8.5 mm</div>
<div class="abs" style="left:438.8px;top:52px;width:6.4px;height:13px;background:#2d2d2d;border-radius:2px"></div>
<svg class="ic" style="left:439px;top:54px;overflow:visible" width="6" height="10" viewBox="0 0 6 10"><g transform="translate(0.00,-0.50)"><path d="M1.5 3.3 L3 1.9 L4.5 3.3 M1.5 7.6 L3 9 L4.5 7.6" fill="none" stroke="#6c6c6c" stroke-width="0.9"/></g></svg>
<div class="vs" style="left:451.2px;top:52px"></div>
<svg class="ic" style="left:460px;top:53px;overflow:visible" width="11" height="12" viewBox="0 0 11 12"><g transform="translate(0.40,0.40)"><path d="M1.6 0.4 V11 M9 0.4 V11 M0.4 1.6 H10.2 M0.4 9.8 H10.2" stroke="#e4e4e4" stroke-width="0.9" fill="none"/><path d="M3.6 3.8 H7 M5.3 3.8 V7.8" stroke="#e4e4e4" stroke-width="0.8"/></g></svg>
<div class="abs" style="left:484.2px;top:52.6px;font-size:11.4px;line-height:13px;color:#d4d4d4;font-weight:700;transform:scaleX(.8);transform-origin:0 50%">fi</div>
<div class="vs" style="left:501.2px;top:52px"></div>
<div class="abs" style="left:512.2px;top:50.8px;font-size:12.8px;line-height:13px;color:#d4d4d4">a</div>
<div class="f" style="left:528px;top:52px;width:72px;background:#1e1e1e;padding-left:1.8px;font-size:6.8px;letter-spacing:-.08px;border-radius:2px 0 0 2px">[スタイルなし]</div>
<div class="abs" style="left:599.8px;top:52px;width:8.4px;height:13px;background:#555;border-radius:0 2px 2px 0"></div>
<svg class="ic" style="left:601px;top:56px;overflow:visible" width="6" height="5" viewBox="0 0 6 5"><g transform="translate(0.00,0.40)"><path d="M1.4 1.3 L3 3.1 L4.6 1.3" fill="none" stroke="#eee" stroke-width="1.1"/></g></svg>
<svg class="ic" style="left:614px;top:53px;overflow:visible" width="11" height="11" viewBox="0 0 11 11"><g transform="translate(-0.40,0.40)"><path d="M1.6 5.6 A3.7 3.7 0 0 1 8 2.8 M8.8 5 A3.7 3.7 0 0 1 2.4 7.8" fill="none" stroke="#5c5c5c" stroke-width="0.9"/><path d="M6.4 0.6 L8.4 2.8 L5.8 3.6 M4 9.8 L2 7.8 L4.6 7" fill="none" stroke="#5c5c5c" stroke-width="0.8"/></g></svg>
<div class="vs" style="left:633.2px;top:52px"></div>
<svg class="ic" style="left:644px;top:55px;overflow:visible" width="8" height="11" viewBox="0 0 8 11"><g transform="translate(-0.20,-0.40)"><path d="M3.2 0.6 H6.8" stroke="#ddd" stroke-width="0.9"/><path d="M3.4 0.6 A2.2 2.2 0 0 0 3.4 5 Z" fill="#e2e2e2"/><path d="M3.6 0.6 V6" stroke="#ddd" stroke-width="1"/><path d="M5.8 0.6 V9.6" stroke="#777" stroke-width="1.2"/><path d="M3.6 6 V9.6" stroke="#666" stroke-width="0.8"/></g></svg>
<div class="f" style="left:660px;top:52px;width:72px;background:#1e1e1e;padding-left:1.8px;font-size:6.8px;letter-spacing:-.05px;border-radius:2px 0 0 2px">[スタイルなし]</div>
<div class="abs" style="left:731.9px;top:52px;width:8.4px;height:13px;background:#555;border-radius:0 2px 2px 0"></div>
<svg class="ic" style="left:733px;top:56px;overflow:visible" width="6" height="5" viewBox="0 0 6 5"><g transform="translate(0.10,0.40)"><path d="M1.4 1.3 L3 3.1 L4.6 1.3" fill="none" stroke="#eee" stroke-width="1.1"/></g></svg>
<svg class="ic" style="left:746px;top:53px;overflow:visible" width="11" height="11" viewBox="0 0 11 11"><g transform="translate(-0.20,0.40)"><path d="M1.6 5.6 A3.7 3.7 0 0 1 8 2.8 M8.8 5 A3.7 3.7 0 0 1 2.4 7.8" fill="none" stroke="#5c5c5c" stroke-width="0.9"/><path d="M6.4 0.6 L8.4 2.8 L5.8 3.6 M4 9.8 L2 7.8 L4.6 7" fill="none" stroke="#5c5c5c" stroke-width="0.8"/></g></svg>
<div class="vs" style="left:765px;top:52px"></div>
<svg class="ic" style="left:775px;top:53px;overflow:visible" width="12" height="12" viewBox="0 0 12 12"><g transform="translate(-0.40,0.00)"><g fill="none" stroke="#e0e0e0" stroke-width="0.7"><rect x="0.8" y="0.8" width="2" height="2"/><rect x="4.8" y="0.8" width="2" height="2"/><rect x="8.8" y="0.8" width="2" height="2"/><rect x="8.8" y="4.8" width="2" height="2"/><rect x="8.8" y="8.8" width="2" height="2"/><rect x="0.8" y="4.6" width="6" height="6" stroke-dasharray="1.2 0.8" stroke-width="1"/></g></g></svg>
<div class="vs" style="left:795.4px;top:52px"></div>
</div>

</div>
<div id="lp"><div class="abs" style="left:130px;top:50px;width:11px;height:462px;background:#383838"></div><div class="abs" style="left:124px;top:0;width:17px;height:27px;background:#1f1f1f"></div>
<div class="th" style="top:38.7px"><div class="tt" style="left:8.3px;top:5.56px">でくしゅん、そこへ大皿小皿ががちゃんぱ</div><div class="tt" style="left:8.3px;top:8.12px">りん——ふたたびグリフォンの鳴き声、ト</div><div class="tt s" style="left:8.3px;top:10.68px">カゲの黒板チョークのきーき</div><div class="tt" style="left:8.3px;top:15.80px">ー、さらに取りおさえられたモルモットの</div><div class="tt" style="left:8.3px;top:18.36px">もがく声があたりにひびき、そこへかなた</div><div class="tt" style="left:8.3px;top:20.93px">からまじり合うあわれなウミガメフーミの</div><div class="tt" style="left:8.3px;top:23.49px">さめざめ。だからじっとしたまま、ひとみ</div><div class="tt s" style="left:8.3px;top:26.05px">を</div><div class="tt s" style="left:8.3px;top:31.17px">とじていると、もう半な</div><div class="tt s" style="left:8.3px;top:33.73px">かばふしぎの国にいるようで、目</div><div class="tt" style="left:8.3px;top:36.29px">をいまひとたび開けてしまえば、つまらな</div><div class="tt s" style="left:8.3px;top:38.85px">い現実うつつにみんな変わってしまうと</div><div class="tt s" style="left:8.3px;top:43.98px">わかっているのに——草はきっ</div><div class="tt s" style="left:8.3px;top:46.54px">　と風でかさかさしてるだけで、</div><div class="tt" style="left:8.3px;top:49.10px">池がそよぐ草に波を立てているだけで——</div><div class="tt" style="left:48.2px;top:5.56px">ティーカップのかちゃかちゃは羊につけら</div><div class="tt" style="left:48.2px;top:8.12px">れた鈴の音に、クイーンのきぃきぃ声も羊</div><div class="tt" style="left:48.2px;top:10.68px">かいの男の子のさけび声に——さらに赤ち</div><div class="tt s" style="left:48.2px;top:13.24px">ゃん</div><div class="tt s" style="left:48.2px;top:18.36px">のくしゃみ、グリフォンの鳴き声</div><div class="tt" style="left:48.2px;top:20.93px">、そのほかけったいな物音だってみんな（</div><div class="tt" style="left:48.2px;top:23.49px">わかってる）、きっとせわしない牧場まき</div><div class="tt" style="left:48.2px;top:31.17px">　ばのごちゃごちゃがやがやに——それか</div><div class="tt" style="left:48.2px;top:33.73px">ら、遠くから聞こえる牛のモーモーに、ウ</div><div class="tt s" style="left:48.2px;top:36.29px">ミガメフーミのなみだ声も入れ変わ</div><div class="tt" style="left:48.2px;top:38.85px">　ってしまうだけなのに。最後にひとり思</div><div class="tt" style="left:48.2px;top:41.41px">いえがくのは、この当の小さい妹がこれか</div><div class="tt" style="left:48.2px;top:43.98px">ら先、ひとりの女に育っていくさま。大人</div><div class="tt" style="left:48.2px;top:46.54px">にふくらんでいくなかでもずっと、子ども</div><div class="tt s" style="left:48.2px;top:49.10px">のころの、すなおなあたたか</div><div class="tt" style="left:48.2px;top:51.66px">　い心を持ち続けていくのか。そして、だ</div></div><div class="tsp" style="top:34.2px"></div><div class="tl" style="top:109.1px">ページ202、203</div><div class="th" style="top:136.8px"><div class="tt" style="left:8.3px;top:5.56px">トカゲの黒板チョークのきーきー、さらに</div><div class="tt" style="left:8.3px;top:8.12px">取りおさえられたモルモットのもがく声が</div><div class="tt s" style="left:8.3px;top:10.68px">あたりにひびき、そこへかなた</div><div class="tt" style="left:8.3px;top:13.24px">　からまじり合うあわれなウミガメフーミ</div><div class="tt" style="left:8.3px;top:15.80px">のさめざめ。だからじっとしたまま、ひと</div><div class="tt" style="left:8.3px;top:18.36px">みをとじていると、もう半なかばふしぎの</div><div class="tt" style="left:8.3px;top:20.93px">国にいるようで、目をいまひとたび開けて</div><div class="tt" style="left:8.3px;top:23.49px">しまえば、つまらない現実うつつにみんな</div><div class="tt" style="left:8.3px;top:26.05px">変わってしまうとわかっているのに——草</div><div class="tt" style="left:8.3px;top:28.61px">はきっと風でかさかさしてるだけで、池が</div><div class="tt" style="left:8.3px;top:31.17px">そよぐ草に波を立てているだけで——ティ</div><div class="tt" style="left:8.3px;top:33.73px">ーカップのかちゃかちゃは羊につけられた</div><div class="tt" style="left:8.3px;top:36.29px">鈴の音に、クイーンのきぃきぃ声も羊かい</div><div class="tt s" style="left:8.3px;top:38.85px">　の男の子のさけび声に——さらに</div><div class="tt" style="left:8.3px;top:41.41px">赤ちゃんのくしゃみ、グリフォンの鳴き声</div><div class="tt" style="left:8.3px;top:43.98px">、そのほかけったいな物音だってみんな（</div><div class="tt s" style="left:8.3px;top:46.54px">わかって</div><div class="tt" style="left:8.3px;top:49.10px">　る）、きっとせわしない牧場まきばのご</div><div class="tt" style="left:8.3px;top:51.66px">ちゃごちゃがやがやに——それから、遠く</div><div class="tt" style="left:48.2px;top:5.56px">から聞こえる牛のモーモーに、ウミガメフ</div><div class="tt" style="left:48.2px;top:8.12px">ーミのなみだ声も入れ変わってしまうだけ</div><div class="tt" style="left:48.2px;top:10.68px">なのに。最後にひとり思いえがくのは、こ</div><div class="tt" style="left:48.2px;top:13.24px">の当の小さい妹がこれから先、ひとりの女</div><div class="tt" style="left:48.2px;top:15.80px">　に育っていくさま。大人にふくらんでい</div><div class="tt" style="left:48.2px;top:18.36px">くなかでもずっと、子どものころの、すな</div><div class="tt" style="left:48.2px;top:20.93px">おなあたたかい心を持ち続けていくのか。</div><div class="tt" style="left:48.2px;top:23.49px">そして、だれかの子どもをそばに集め、た</div><div class="tt s" style="left:48.2px;top:26.05px">くさんとっぴな話</div><div class="tt" style="left:48.2px;top:28.61px">　をしては、その子たちの目をきらきらか</div><div class="tt s" style="left:48.2px;top:31.17px">がやかせるのだろうか。その話は</div><div class="tt" style="left:48.2px;top:33.73px">　、遠い昔のふしぎの国のゆめそのものだ</div><div class="tt" style="left:48.2px;top:36.29px">ったり？すなおに悲しむその子たちのそば</div><div class="tt" style="left:48.2px;top:38.85px">で、自分もと、すなおにはしゃぐその子た</div><div class="tt" style="left:48.2px;top:41.41px">ちにかこまれ、楽しかったと気づくのかな</div><div class="tt" style="left:48.2px;top:43.98px">ひとみんなを処すとか言いだして——また</div><div class="tt" style="left:48.2px;top:46.54px">もやブタの赤ちゃんが御前さまのおひざで</div><div class="tt" style="left:48.2px;top:49.10px">くしゅん、そこへ大皿小皿ががちゃんぱり</div><div class="tt" style="left:48.2px;top:51.66px">ん——ふたたびグリフォンの鳴き声、トカ</div></div><div class="tsp" style="top:132.3px"></div><div class="tl" style="top:207.2px">ページ204、205</div><div class="th" style="top:234.9px"><div class="tt" style="left:8.3px;top:5.56px">があたりにひびき、そこへかなたからまじ</div><div class="tt" style="left:8.3px;top:8.12px">り合うあわれなウミガメフーミのさめざめ</div><div class="tt" style="left:8.3px;top:10.68px">。だからじっとしたまま、ひとみをとじて</div><div class="tt" style="left:8.3px;top:13.24px">いると、もう半なかばふしぎの国にいるよ</div><div class="tt s" style="left:8.3px;top:15.80px">うで、目をいまひとたび開けてしまえ</div><div class="tt" style="left:8.3px;top:18.36px">　ば、つまらない現実うつつにみんな変わ</div><div class="tt" style="left:8.3px;top:20.93px">ってしまうとわかっているのに——草はき</div><div class="tt" style="left:8.3px;top:23.49px">っと風でかさかさしてるだけで、池がそよ</div><div class="tt" style="left:8.3px;top:26.05px">ぐ草に波を立てているだけで——ティーカ</div><div class="tt s" style="left:8.3px;top:28.61px">ップの</div><div class="tt" style="left:8.3px;top:31.17px">　かちゃかちゃは羊につけられた鈴の音に</div><div class="tt s" style="left:8.3px;top:33.73px">、クイーンのきぃきぃ声</div><div class="tt" style="left:8.3px;top:36.29px">　も羊かいの男の子のさけび声に——さら</div><div class="tt" style="left:8.3px;top:38.85px">に赤ちゃんのくしゃみ、グリフォンの鳴き</div><div class="tt" style="left:8.3px;top:41.41px">声、そのほかけったいな物音だってみんな</div><div class="tt" style="left:8.3px;top:43.98px">　（わかってる）、きっとせわしない牧場</div><div class="tt s" style="left:8.3px;top:46.54px">まきばのごちゃごちゃがやが</div><div class="tt" style="left:8.3px;top:49.10px">　やに——それから、遠くから聞こえる牛</div><div class="tt s" style="left:8.3px;top:51.66px">のモーモーに、ウミガメフーミのなみだ</div><div class="tt" style="left:48.2px;top:5.56px">　声も入れ変わってしまうだけなのに。最</div><div class="tt s" style="left:48.2px;top:8.12px">後に</div><div class="tt s" style="left:48.2px;top:10.68px">　ひとり思いえがくの</div><div class="tt" style="left:48.2px;top:13.24px">は、この当の小さい妹がこれから先、ひと</div><div class="tt" style="left:48.2px;top:15.80px">りの女に育っていくさま。大人にふくらん</div><div class="tt s" style="left:48.2px;top:18.36px">でい</div><div class="tt" style="left:48.2px;top:20.93px">　くなかでもずっと、子どものころの、す</div><div class="tt" style="left:48.2px;top:23.49px">なおなあたたかい心を持ち続けていくのか</div><div class="tt" style="left:48.2px;top:26.05px">。そして、だれかの子どもをそばに集め、</div><div class="tt s" style="left:48.2px;top:28.61px">たく</div><div class="tt" style="left:48.2px;top:33.73px">　さんとっぴな話をしては、その子たちの</div><div class="tt" style="left:48.2px;top:36.29px">目をきらきらかがやかせるのだろうか。そ</div><div class="tt" style="left:48.2px;top:38.85px">の話は、遠い昔のふしぎの国のゆめそのも</div><div class="tt" style="left:48.2px;top:41.41px">のだったり？すなおに悲しむその子たちの</div><div class="tt" style="left:48.2px;top:43.98px">そばで、自分もと、すなおにはしゃぐその</div><div class="tt" style="left:48.2px;top:46.54px">子たちにかこまれ、楽しかったと気づくの</div><div class="tt" style="left:48.2px;top:49.10px">　かな、自分の子ども時代の思い出、あの</div><div class="tt s" style="left:48.2px;top:51.66px">—またもやブタの赤ちゃんが御前さ</div></div><div class="tsp" style="top:230.4px"></div><div class="tl" style="top:305.3px">ページ206、207</div><div class="th" style="top:332.9px"><div class="tt" style="left:8.3px;top:5.56px">　め。だからじっとしたまま、ひとみをと</div><div class="tt" style="left:8.3px;top:8.12px">じていると、もう半なかばふしぎの国にい</div><div class="tt" style="left:8.3px;top:10.68px">るようで、目をいまひとたび開けてしまえ</div><div class="tt" style="left:8.3px;top:13.24px">ば、つまらない現実うつつにみんな変わっ</div><div class="tt" style="left:8.3px;top:15.80px">てしまうとわかっているのに——草はきっ</div><div class="tt" style="left:8.3px;top:18.36px">と風でかさかさしてるだけで、池がそよぐ</div><div class="tt" style="left:8.3px;top:20.93px">草に波を立てているだけで——ティーカッ</div><div class="tt" style="left:8.3px;top:23.49px">プのかちゃかちゃは羊につけられた鈴の音</div><div class="tt" style="left:8.3px;top:26.05px">に、クイーンのきぃきぃ声も羊かいの男の</div><div class="tt" style="left:8.3px;top:28.61px">子のさけび声に——さらに赤ちゃんのくし</div><div class="tt" style="left:8.3px;top:31.17px">ゃみ、グリフォンの鳴き声、そのほかけっ</div><div class="tt s" style="left:8.3px;top:33.73px">たいな物音だってみ</div><div class="tt" style="left:8.3px;top:38.85px">　んな（わかってる）、きっとせわしない</div><div class="tt" style="left:8.3px;top:41.41px">牧場まきばのごちゃごちゃがやがやに——</div><div class="tt" style="left:8.3px;top:43.98px">それから、遠くから聞こえる牛のモーモー</div><div class="tt" style="left:8.3px;top:46.54px">に、ウミガメフーミのなみだ声も入れ変わ</div><div class="tt" style="left:8.3px;top:49.10px">ってしまうだけなのに。最後にひとり思い</div><div class="tt" style="left:8.3px;top:51.66px">　えがくのは、この当の小さい妹がこれか</div><div class="tt" style="left:48.2px;top:5.56px">ら先、ひとりの女に育っていくさま。大人</div><div class="tt" style="left:48.2px;top:8.12px">にふくらんでいくなかでもずっと、子ども</div><div class="tt" style="left:48.2px;top:10.68px">のころの、すなおなあたたかい心を持ち続</div><div class="tt" style="left:48.2px;top:13.24px">けていくのか。そして、だれかの子どもを</div><div class="tt" style="left:48.2px;top:15.80px">そばに集め、たくさんとっぴな話をしては</div><div class="tt" style="left:48.2px;top:18.36px">、その子たちの目をきらきらかがやかせる</div><div class="tt" style="left:48.2px;top:20.93px">のだろうか。その話は、遠い昔のふしぎの</div><div class="tt" style="left:48.2px;top:23.49px">国のゆめそのものだったり？すなおに悲し</div><div class="tt" style="left:48.2px;top:26.05px">むその子たちのそばで、自分もと、すなお</div><div class="tt" style="left:48.2px;top:28.61px">にはしゃぐその子たちにかこまれ、楽しか</div><div class="tt" style="left:48.2px;top:31.17px">ったと気づくのかな、自分の子ども時代の</div><div class="tt s" style="left:48.2px;top:33.73px">言い</div><div class="tt" style="left:48.2px;top:36.29px">　だして——またもやブタの赤ちゃんが御</div><div class="tt" style="left:48.2px;top:38.85px">前さまのおひざでくしゅん、そこへ大皿小</div><div class="tt" style="left:48.2px;top:41.41px">皿ががちゃんぱりん——ふたたびグリフォ</div><div class="tt" style="left:48.2px;top:43.98px">ンの鳴き声、トカゲの黒板チョークのきー</div><div class="tt" style="left:48.2px;top:46.54px">きー、さらに取りおさえられたモルモット</div><div class="tt" style="left:48.2px;top:49.10px">のもがく声があたりにひびき、そこへかな</div><div class="tt" style="left:48.2px;top:51.66px">たからまじり合うあわれなウミガメフーミ</div></div><div class="tsp" style="top:328.4px"></div><div class="tl" style="top:403.3px">ページ208、209</div><div class="tsel" style="top:429.0px"></div><div class="th" style="top:431.0px"><div class="tt" style="left:8.3px;top:5.56px">るようで、目をいまひとたび開けてしまえ</div><div class="tt" style="left:8.3px;top:8.12px">ば、つまらない現実うつつにみんな変わっ</div><div class="tt" style="left:8.3px;top:10.68px">てしまうとわかっているのに——草はきっ</div><div class="tt" style="left:8.3px;top:13.24px">と風でかさかさしてるだけで、池がそよぐ</div><div class="tt" style="left:8.3px;top:15.80px">草に波を立てているだけで——ティーカッ</div><div class="tt" style="left:8.3px;top:18.36px">プのかちゃかちゃは羊につけられた鈴の音</div><div class="tt" style="left:8.3px;top:20.93px">に、クイーンのきぃきぃ声も羊かいの男の</div><div class="tt s" style="left:8.3px;top:23.49px">子のさけび声に——さらに赤ちゃんの</div><div class="tt" style="left:8.3px;top:26.05px">　くしゃみ、グリフォンの鳴き声、そのほ</div><div class="tt" style="left:8.3px;top:28.61px">かけったいな物音だってみんな（わかって</div><div class="tt" style="left:8.3px;top:31.17px">る）、きっとせわしない牧場まきばのごち</div><div class="tt" style="left:8.3px;top:33.73px">ゃごちゃがやがやに——それから、遠くか</div><div class="tt" style="left:8.3px;top:36.29px">ら聞こえる牛のモーモーに、ウミガメフー</div><div class="tt" style="left:8.3px;top:38.85px">ミのなみだ声も入れ変わってしまうだけな</div><div class="tt" style="left:8.3px;top:41.41px">のに。最後にひとり思いえがくのは、この</div><div class="tt" style="left:8.3px;top:43.98px">当の小さい妹がこれから先、ひとりの女に</div><div class="tt" style="left:8.3px;top:46.54px">育っていくさま。大人にふくらんでいくな</div><div class="tt" style="left:8.3px;top:49.10px">かでもずっと、子どものころの、すなおな</div><div class="tt" style="left:8.3px;top:51.66px">あたたかい心を持ち続けていくのか。そし</div><div class="tt" style="left:48.2px;top:5.56px">て、だれかの子どもをそばに集め、たくさ</div><div class="tt" style="left:48.2px;top:8.12px">んとっぴな話をしては、その子たちの目を</div><div class="tt" style="left:48.2px;top:10.68px">きらきらかがやかせるのだろうか。その話</div><div class="tt" style="left:48.2px;top:13.24px">は、遠い昔のふしぎの国のゆめそのものだ</div><div class="tt s" style="left:48.2px;top:15.80px">ったり？すなおに悲しむその子</div><div class="tt" style="left:48.2px;top:18.36px">　たちのそばで、自分もと、すなおにはし</div><div class="tt" style="left:48.2px;top:20.93px">ゃぐその子たちにかこまれ、楽しかったと</div><div class="tt" style="left:48.2px;top:23.49px">気づくのかな、自分の子ども時代の思い出</div><div class="tt" style="left:48.2px;top:26.05px">して——またもやブタの赤ちゃんが御前さ</div><div class="tt" style="left:48.2px;top:28.61px">まのおひざでくしゅん、そこへ大皿小皿が</div><div class="tt" style="left:48.2px;top:31.17px">がちゃんぱりん——ふたたびグリフォンの</div><div class="tt" style="left:48.2px;top:33.73px">鳴き声、トカゲの黒板チョークのきーきー</div><div class="tt" style="left:48.2px;top:36.29px">、さらに取りおさえられたモルモットのも</div><div class="tt" style="left:48.2px;top:38.85px">がく声があたりにひびき、そこへかなたか</div><div class="tt s" style="left:48.2px;top:41.41px">らまじり合うあわれなウミガメフーミの</div><div class="tt" style="left:48.2px;top:43.98px">さめざめ。だからじっとしたまま、ひとみ</div><div class="tt s" style="left:48.2px;top:46.54px">をとじていると、もう半なかばふしぎの</div><div class="tt" style="left:48.2px;top:49.10px">国にいるようで、目をいまひとたび開けて</div><div class="tt s" style="left:48.2px;top:51.66px">しまえば、つま</div></div><div class="tsp" style="top:426.5px"></div><div class="tl" style="top:501.4px">ページ210、211</div>
<div class="abs" style="left:134px;top:494px;width:3px;height:20px;border-radius:1.5px;background:#585858"></div>
<div id="tabs">
 <div class="abs" style="left:8.6px;top:3px;width:2.4px;height:10px;border-radius:1.2px;background:#4a4a4a"></div>
 <div class="abs" style="left:16.0px;top:1.2px;width:29px;height:12.4px;border-radius:3px;background:#454545"></div>
 <div class="abs" style="left:20.2px;top:1.6px;font-size:7.2px;line-height:11px;font-weight:700;color:#fff">ページ</div>
 <div class="abs" style="left:49.6px;top:1.6px;font-size:7.2px;line-height:11px;font-weight:500;color:#d0d0d0;letter-spacing:-.15px">アセット</div>
 <div class="abs" style="left:86.0px;top:1.6px;font-size:7.2px;line-height:11px;font-weight:500;color:#d0d0d0">ストック</div>
 <div class="abs" style="left:123.2px;top:1.4px;width:11px;height:11.4px;border:1px solid #6a6a6a;border-radius:3px"></div>
 <svg class="abs" style="left:123px;top:1px;overflow:visible" width="11" height="11.4" viewBox="0 0 11 11.4"><g transform="translate(0.20,0.40)"><path d="M2.9 4.2 L5.5 7.4 L8.1 4.2" fill="none" stroke="#f0f0f0" stroke-width="1.1"/></g></svg>
</div><div class="strip"></div>
<div class="row" style="top:18px;height:15.4px"></div>
<div class="abs" style="left:3.6px;top:33.4px;width:120.8px;height:1.4px;background:#1a1a1a"></div>
<div class="row" style="top:34.8px;height:15.8px"></div>
<div class="abs rt" style="left:8.8px;top:21px">&gt;</div><div class="abs rt" style="left:17.4px;top:21.6px">マスターページ</div>
<div class="abs rt" style="left:17.4px;top:38.4px">ページ</div>
<svg class="abs" style="left:8px;top:39px;overflow:visible" width="7" height="6" viewBox="0 0 7 6"><g transform="translate(0.00,0.00)"><path d="M1.2 1.4 L3.4 4.2 L5.6 1.4" fill="none" stroke="#e8e8e8" stroke-width="1"/></g></svg>
<svg class="abs" style="left:94px;top:20px;overflow:visible" width="30" height="12" viewBox="0 0 30 12"><g transform="translate(0.00,0.00)"><path d="M1.5 1.1 H7 L9 3 V10.9 H1.5 Z" fill="none" stroke="#eee" stroke-width="1.1"/><rect x="3" y="4" width="4.6" height="4.8" fill="#9a9a9a"/><path d="M3 2.5 H6" stroke="#ddd" stroke-width="0.9"/>
 <g stroke="#6a6a6a" fill="none" stroke-width="1"><path d="M16.5 3 H22.5 V10.9 H16.5 Z"/><path d="M18.5 1 H25 V8.8"/><path d="M18 5.5 H21 M18 7.5 H21" stroke-width="1"/></g></g></svg>
<svg class="abs" style="left:70px;top:38px;overflow:visible" width="12" height="11" viewBox="0 0 12 11"><g transform="translate(0.00,0.00)"><path d="M0 0.5 H10.4 M0 2.5 H10.4 M0 4.5 H2.8 M7.6 4.5 H10.4 M0 6.5 H2.8 M7.6 6.5 H10.4" stroke="#e6e6e6" stroke-width="0.9" fill="none"/><path d="M3.7 2.2 H6.9 V9.8 L5.3 8.2 L3.7 9.8 Z" fill="#f2f2f2"/></g></svg>
<svg class="abs" style="left:94px;top:37px;overflow:visible" width="30" height="12" viewBox="0 0 30 12"><g transform="translate(0.00,0.00)"><path d="M5.6 1.5 H1.5 V10.4 H8.9 V4.6" fill="none" stroke="#eee" stroke-width="1.2"/><path d="M5.6 3.2 H9.6 M7.6 1.2 V5.2" stroke="#9a9a9a" stroke-width="1"/>
 <g stroke="#6a6a6a" fill="none" stroke-width="1"><path d="M16.5 3.4 H22.5 V10.8 H16.5 Z"/><path d="M18.5 1.4 H25 V8.8"/></g></g></svg>
</div>
</body></html>
